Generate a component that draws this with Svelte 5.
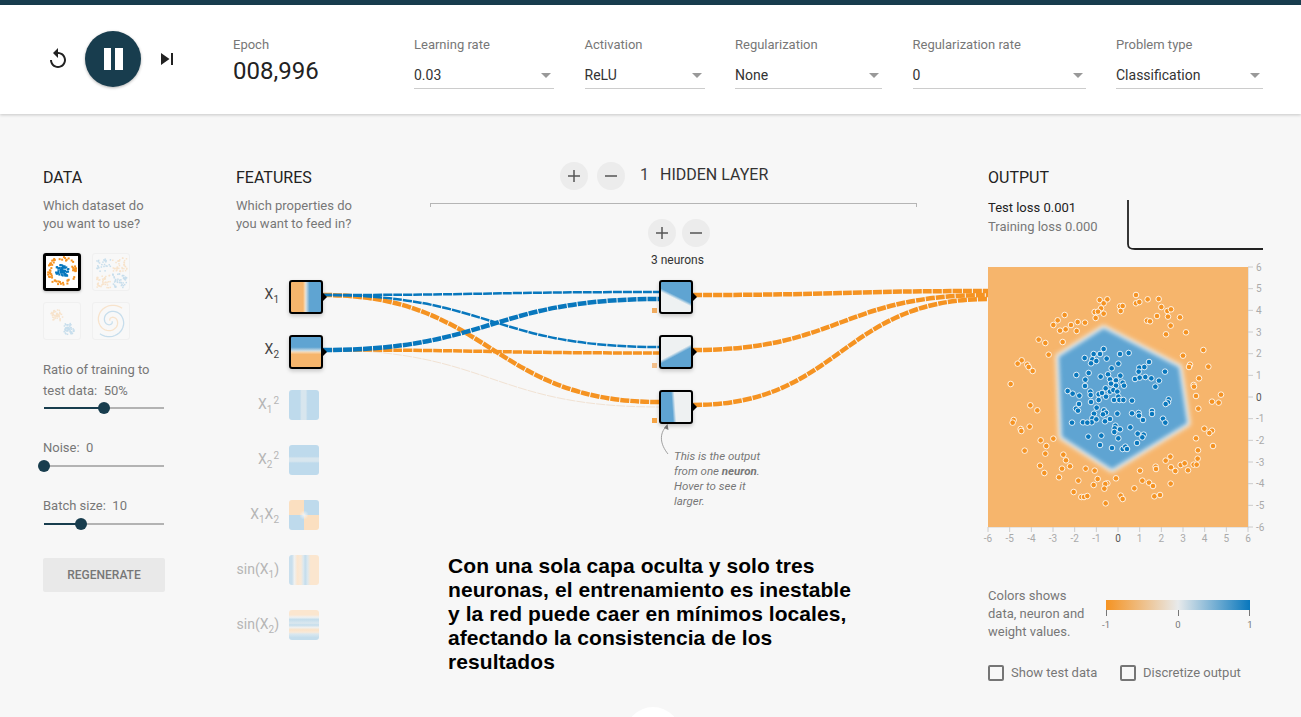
<script lang="ts">
  /* Neural net playground screen. Plot points are in crop coords, see toPlot. */
  const selects = [
    { label: 'Learning rate', value: '0.03', w: 140 },
    { label: 'Activation', value: 'ReLU', w: 120 },
    { label: 'Regularization', value: 'None', w: 147 },
    { label: 'Regularization rate', value: '0', w: 173 },
    { label: 'Problem type', value: 'Classification', w: 147 },
  ]

  const sliders = [
    { lines: ['Ratio of training to', 'test data:\u00a0\u00a050%'], pct: 50, cls: 'first' },
    { lines: ['Noise:\u00a0\u00a00'], pct: 0, cls: '' },
    { lines: ['Batch size:\u00a0\u00a010'], pct: 31, cls: '' },
  ]

  const ORANGE = '#f59322'
  const BLUE = '#0877bd'

  // seeded so the thumbnails come out the same every load
  let seed = 12345
  function rnd() {
    seed = (seed + 0x6d2b79f5) | 0
    let t = Math.imul(seed ^ (seed >>> 15), 1 | seed)
    t = (t + Math.imul(t ^ (t >>> 7), 61 | t)) ^ t
    return ((t ^ (t >>> 14)) >>> 0) / 4294967296
  }

  type Cell = { x: number; y: number; c: string }

  function circleCells(): Cell[] {
    const out: Cell[] = []
    for (let i = 0; i < 60; i++) {
      const a = rnd() * Math.PI * 2
      const r = 11 + rnd() * 3.500
      out.push({ x: 15 + Math.cos(a) * r, y: 14 + Math.sin(a) * r, c: ORANGE })
    }
    for (let i = 0; i < 65; i++) {
      const a = rnd() * Math.PI * 2
      const r = rnd() * 7
      out.push({ x: 15 + Math.cos(a) * r, y: 14.500 + Math.sin(a) * r, c: BLUE })
    }
    return out
  }

  function xorCells(): Cell[] {
    const out: Cell[] = []
    for (let i = 0; i < 190; i++) {
      const x = 2 + rnd() * 30
      const y = 2 + rnd() * 30
      if (Math.abs(x - 17) < 1 || Math.abs(y - 17) < 1) continue
      out.push({ x, y, c: (x < 17) === (y < 17) ? BLUE : ORANGE })
    }
    return out
  }

  function gaussCells(): Cell[] {
    const out: Cell[] = []
    for (let i = 0; i < 110; i++) {
      const a = rnd() * Math.PI * 2
      const r = rnd() * 6
      const blue = i % 2 === 0
      out.push({
        x: (blue ? 23 : 11) + Math.cos(a) * r,
        y: (blue ? 24 : 11) + Math.sin(a) * r,
        c: blue ? BLUE : ORANGE,
      })
    }
    return out
  }

  function spiralPath(turn: number) {
    let d = ''
    for (let i = 0; i <= 50; i++) {
      const t = i / 50
      const a = turn + t * Math.PI * 2.600
      const r = 1 + t * 16
      d += (i ? 'L' : 'M') + (18 + Math.cos(a) * r).toFixed(1) + ' ' + (18 + Math.sin(a) * r).toFixed(1)
    }
    return d
  }

  const circles = circleCells()
  const xor = xorCells()
  const gauss = gaussCells()

  const features = [
    { cls: 'x1', active: true, name: 'X', sub: '1', sup: '' },
    { cls: 'x2', active: true, name: 'X', sub: '2', sup: '' },
    { cls: 'x1sq', active: false, name: 'X', sub: '1', sup: '2' },
    { cls: 'x2sq', active: false, name: 'X', sub: '2', sup: '2' },
    { cls: 'x1x2', active: false, name: 'X', sub: '1', sup: '' },
    { cls: 'sinx1', active: false, name: 'sin(X', sub: '1', sup: '' },
    { cls: 'sinx2', active: false, name: 'sin(X', sub: '2', sup: '' },
  ]

  const neurons = ['n1', 'n2', 'n3']

  function link(x0: number, y0: number, x1: number, y1: number) {
    const m = (x0 + x1) / 2
    return `M${x0} ${y0}C${m} ${y0} ${m} ${y1} ${x1} ${y1}`
  }

  const links = [
    { d: link(323, 350, 659, 407), c: '#f1e2d3', w: 1 },
    { d: link(323, 295, 659, 402), c: ORANGE, w: 4.5 },
    { d: link(323, 350, 659, 353), c: ORANGE, w: 3.5 },
    { d: link(323, 295, 659, 347), c: BLUE, w: 2.5 },
    { d: link(323, 295, 659, 292), c: BLUE, w: 2.5 },
    { d: link(323, 350, 659, 299), c: BLUE, w: 4.5 },
    { d: link(693, 295, 988, 291), c: ORANGE, w: 4.5 },
    { d: link(693, 350, 988, 295), c: ORANGE, w: 4.5 },
    { d: link(693, 405, 988, 299), c: ORANGE, w: 4.5 },
  ]

  const orangePts = [[382,118],[359,120],[371,130],[363,145],[344,156],[354,155],[371,161],[347,174],[468,105],[468,130],[478,126],[503,118],[536,117],[544,141],[562,153],[573,148],[564,170],[531,168],[501,182],[510,184],[600,172],[572,197],[618,217],[558,223],[420,139],[428,138],[422,153],[254,165],[233,181],[220,195],[240,212],[257,208],[273,195],[293,186],[315,188],[290,213],[248,246],[176,239],[196,249],[206,284],[125,301],[113,311],[142,314],[146,321],[158,333],[92,372],[670,270],[609,287],[630,314],[627,321],[685,320],[657,355],[641,375],[642,380],[648,408],[723,404],[696,425],[716,428],[655,446],[151,436],[172,451],[101,480],[98,488],[149,500],[122,507],[124,513],[220,536],[182,541],[199,558],[196,581],[134,572],[180,617],[193,639],[250,584],[258,601],[246,626],[270,619],[237,652],[317,626],[344,632],[295,662],[353,657],[341,675],[382,670],[376,672],[373,686],[408,655],[281,696],[304,711],[312,711],[322,708],[377,730],[422,707],[428,717],[463,685],[480,632],[487,662],[507,668],[519,678],[523,709],[540,705],[572,671],[527,620],[528,627],[557,602],[571,590],[573,622],[586,633],[602,615],[614,610],[624,631],[641,614],[650,614],[653,596],[654,571],[648,535],[673,506],[696,512],[688,519],[699,558]]
  const bluePts = [[371,267],[341,282],[360,282],[314,294],[337,298],[349,303],[380,296],[333,310],[420,282],[446,279],[415,311],[395,325],[507,306],[478,323],[493,321],[476,335],[555,335],[326,339],[289,345],[316,359],[315,378],[362,350],[384,343],[421,347],[390,358],[408,361],[393,371],[408,377],[428,368],[432,377],[465,357],[479,353],[496,351],[514,355],[537,362],[526,380],[377,385],[390,395],[331,395],[263,393],[278,401],[298,407],[332,405],[356,403],[366,399],[356,420],[333,426],[378,410],[400,390],[412,395],[415,410],[402,420],[418,420],[430,420],[456,422],[566,418],[564,427],[557,432],[297,432],[288,446],[294,452],[350,443],[372,451],[378,458],[369,463],[342,461],[337,475],[349,478],[335,487],[375,484],[390,477],[412,461],[456,460],[476,459],[477,467],[516,453],[516,462],[489,480],[549,476],[556,488],[276,488],[309,487],[322,488],[406,497],[404,505],[420,508],[451,502],[403,516],[473,521],[491,524],[487,532],[415,535],[325,530],[364,527],[360,555],[396,564],[428,567],[436,560],[441,567],[471,549]]

  // crop coords (3x, origin 980,260) to plot coords (origin 988,267)
  const toPlot = ([x, y]: number[]) => [x / 3 - 8, y / 3 - 7]
  const hexPts = [[371,205],[597,322],[622,490],[396,628],[245,530],[236,290]]
    .map(toPlot)
    .map((p) => p.map((v) => v.toFixed(1)).join(','))
    .join(' ')
  const orangeDots = orangePts.map(toPlot)
  const blueDots = bluePts.map(toPlot)

  const ticks = [-6, -5, -4, -3, -2, -1, 0, 1, 2, 3, 4, 5, 6]
  const pos = (v: number) => ((v + 6) / 12) * 260
</script>

<div class="page">
  <div class="topbar"></div>
  <header class="header">
    <button class="icon-btn reset" aria-label="Reset">
      <svg width="24" height="24" viewBox="0 0 24 24"><path d="M12 5V1L7 6l5 5V7c3.31 0 6 2.69 6 6s-2.69 6-6 6-6-2.69-6-6H4c0 4.42 3.58 8 8 8s8-3.58 8-8-3.58-8-8-8z" /></svg>
    </button>
    <button class="play" aria-label="Pause">
      <span class="bar"></span><span class="bar"></span>
    </button>
    <button class="icon-btn step" aria-label="Step">
      <svg width="24" height="24" viewBox="0 0 24 24"><path d="M6 18l8.5-6L6 6v12zM16 6v12h2V6h-2z" /></svg>
    </button>
    <div class="epoch">
      <div class="field-label">Epoch</div>
      <div class="epoch-value">008,996</div>
    </div>
    <div class="selects">
      {#each selects as s}
        <div class="select" style="width: {s.w}px">
          <div class="field-label">{s.label}</div>
          <div class="select-value">
            <span>{s.value}</span>
            <span class="caret"></span>
          </div>
        </div>
      {/each}
    </div>
  </header>

  <main class="main">
    <svg class="links" width="1301" height="603" viewBox="0 114 1301 603">
      {#each links as l}
        <path d={l.d} fill="none" stroke={l.c} stroke-width={l.w} stroke-dasharray="9 1" />
      {/each}
      <path d="M668 454C660 444 659 434 666.5 426" fill="none" stroke="#8a8a8a" stroke-width="0.8" />
      <path d="M667.500 424L668.500 430L664 428Z" fill="#777" />
    </svg>

    <section class="data">
      <h4>DATA</h4>
      <p class="desc">Which dataset do<br />you want to use?</p>
      <div class="datasets">
        <div class="thumb selected">
          <svg width="32" height="32" viewBox="0 0 32 32">
            {#each circles as p}<rect x={p.x} y={p.y} width="2" height="2" fill={p.c} />{/each}
          </svg>
        </div>
        <div class="thumb">
          <svg width="34" height="34" viewBox="0 0 34 34">
            {#each xor as p}<rect x={p.x} y={p.y} width="1.500" height="1.500" fill={p.c} />{/each}
          </svg>
        </div>
        <div class="thumb">
          <svg width="34" height="34" viewBox="0 0 34 34">
            {#each gauss as p}<rect x={p.x} y={p.y} width="1.500" height="1.500" fill={p.c} />{/each}
          </svg>
        </div>
        <div class="thumb">
          <svg width="36" height="36" viewBox="0 0 36 36">
            <path d={spiralPath(0.4)} fill="none" stroke={BLUE} stroke-width="1.300" />
            <path d={spiralPath(0.4 + Math.PI)} fill="none" stroke={ORANGE} stroke-width="1.300" />
          </svg>
        </div>
      </div>
      {#each sliders as s}
        <div class="slider-block {s.cls}">
          {#each s.lines as line}<div class="slider-label">{line}</div>{/each}
          <div class="slider">
            <div class="slider-fill" style="width: {s.pct}%"></div>
            <div class="slider-thumb" style="left: {s.pct}%"></div>
          </div>
        </div>
      {/each}
      <button class="regen">REGENERATE</button>
    </section>

    <section class="features">
      <h4>FEATURES</h4>
      <p class="desc">Which properties do<br />you want to feed in?</p>
      <div class="feature-list">
        {#each features as f}
          <div class="feature" class:on={f.active}>
            <div class="feature-label">
              {#if f.cls === 'x1x2'}X<sub>1</sub>X<sub>2</sub>{:else}{f.name}<sub>{f.sub}</sub>{#if f.sup}<sup>{f.sup}</sup>{/if}{#if f.name !== 'X'}){/if}{/if}
            </div>
            <div class="heat {f.cls}" class:active={f.active}>
              {#if f.active}<span class="nub"></span>{/if}
            </div>
          </div>
        {/each}
      </div>
    </section>

    <section class="hidden">
      <div class="layer-head">
        <button class="round" aria-label="Add layer">
          <svg width="14" height="14" viewBox="0 0 14 14"><path d="M7 1v12M1 7h12" /></svg>
        </button>
        <button class="round" aria-label="Remove layer">
          <svg width="14" height="14" viewBox="0 0 14 14"><path d="M1 7h12" /></svg>
        </button>
        <span class="layer-count">1</span>
        <span class="layer-title">HIDDEN LAYER</span>
      </div>
      <div class="bracket"></div>
      <div class="neuron-ctl">
        <button class="round" aria-label="Add neuron">
          <svg width="14" height="14" viewBox="0 0 14 14"><path d="M7 1v12M1 7h12" /></svg>
        </button>
        <button class="round" aria-label="Remove neuron">
          <svg width="14" height="14" viewBox="0 0 14 14"><path d="M1 7h12" /></svg>
        </button>
      </div>
      <div class="neuron-count">3 neurons</div>
      <div class="neurons">
        {#each neurons as n}
          <div class="neuron-row">
            <div class="heat active {n}">
              <span class="nub"></span>
              <span class="bias {n}"></span>
            </div>
          </div>
        {/each}
      </div>
      <p class="callout">This is the output<br />from one <b>neuron</b>.<br />Hover to see it<br />larger.</p>
      <p class="note">Con una sola capa oculta y solo tres neuronas, el entrenamiento es inestable y la red puede caer en mínimos locales, afectando la consistencia de los resultados</p>
    </section>

    <section class="output">
      <h4>OUTPUT</h4>
      <div class="loss-row">
        <div class="loss">
          <div class="test">Test loss <span>0.001</span></div>
          <div class="train">Training loss 0.000</div>
        </div>
        <svg class="loss-chart" width="136" height="56" viewBox="0 0 136 56">
          <path d="M1 2V46C1 50 3 51 8 51H136" fill="none" stroke="#222" stroke-width="1.800" />
        </svg>
      </div>
      <svg class="plot" width="275" height="285" viewBox="0 0 275 285">
        <defs>
          <filter id="halo" x="-15%" y="-15%" width="130%" height="130%">
            <feGaussianBlur stdDeviation="2.400" />
          </filter>
          <filter id="soft" x="-10%" y="-10%" width="120%" height="120%">
            <feGaussianBlur stdDeviation="2.200" />
          </filter>
        </defs>
        <rect width="260" height="260" fill="#f6b56c" />
        <polygon points={hexPts} fill="#f0f3f4" stroke="#f0f3f4" stroke-width="6" filter="url(#halo)" />
        <polygon points={hexPts} fill="#5fa4d2" filter="url(#soft)" />
        {#each orangeDots as p}
          <circle cx={p[0]} cy={p[1]} r="2.800" fill={ORANGE} stroke="#fff" stroke-width="1" stroke-opacity="0.85" />
        {/each}
        {#each blueDots as p}
          <circle cx={p[0]} cy={p[1]} r="2.800" fill={BLUE} stroke="#fff" stroke-width="1" stroke-opacity="0.85" />
        {/each}
        <path d="M0 260.500H260.500V0" fill="none" stroke="#e4e4e4" />
        {#each ticks as t}
          <path d="M{pos(t)} 260v5" stroke="#ccc" />
          <path d="M260 {260 - pos(t)}h5" stroke="#ccc" />
          <text class="tick" class:zero={t === 0} x={pos(t)} y="275" text-anchor="middle">{t}</text>
          <text class="tick" class:zero={t === 0} x="268" y={263.500 - pos(t)}>{t}</text>
        {/each}
      </svg>
      <div class="legend">
        <p class="legend-text">Colors shows<br />data, neuron and<br />weight values.</p>
        <div class="scale">
          <div class="scale-bar"></div>
          <div class="scale-ticks">
            <span>-1</span><span>0</span><span>1</span>
          </div>
        </div>
      </div>
      <div class="checks">
        <label class="check first"><span class="box"></span>Show test data</label>
        <label class="check"><span class="box"></span>Discretize output</label>
      </div>
    </section>

    <div class="fab"></div>
  </main>
</div>

<style>
  :global(body) {
    margin: 0;
    background: #f7f7f7;
  }
  .page {
    width: 1301px;
    height: 717px;
    overflow: hidden;
    font-family: Roboto, "Liberation Sans", sans-serif;
    color: #777;
  }
  button {
    font-family: inherit;
    border: none;
    padding: 0;
    background: none;
  }
  .topbar {
    height: 5px;
    background: #183d4e;
  }
  .header {
    position: relative;
    z-index: 2;
    height: 109px;
    box-sizing: border-box;
    display: flex;
    align-items: flex-start;
    padding-left: 46px;
    background: #fff;
    box-shadow: 0 1px 3px rgba(0, 0, 0, 0.2);
  }
  .icon-btn {
    width: 24px;
    height: 24px;
    margin-top: 42px;
  }
  .icon-btn svg {
    display: block;
    fill: #222;
  }
  .play {
    width: 56px;
    height: 56px;
    margin: 26px 13.500px 0 15px;
    border-radius: 50%;
    background: #183d4e;
    display: flex;
    align-items: center;
    justify-content: center;
    gap: 4px;
    box-shadow: 0 1px 3px rgba(0, 0, 0, 0.3);
  }
  .bar {
    width: 7.500px;
    height: 22px;
    background: #fff;
  }
  .epoch {
    width: 181px;
    margin-left: 54.500px;
    padding-top: 32px;
  }
  .field-label {
    font-size: 13px;
    line-height: 16px;
    color: #777;
  }
  .epoch-value {
    margin-top: 3px;
    font-size: 24px;
    line-height: 30px;
    color: #222;
  }
  .selects {
    display: flex;
    gap: 30.500px;
    padding-top: 32px;
  }
  .select-value {
    display: flex;
    align-items: center;
    justify-content: space-between;
    box-sizing: border-box;
    height: 28px;
    margin-top: 8px;
    padding: 0 3px 0 0;
    font-size: 14px;
    color: #333;
    border-bottom: 1px solid #ccc;
  }
  .caret {
    width: 0;
    height: 0;
    margin-top: 2px;
    border-left: 5px solid transparent;
    border-right: 5px solid transparent;
    border-top: 5px solid #999;
  }
  .main {
    position: relative;
    height: 603px;
    display: flex;
    padding: 54px 0 0 43px;
    box-sizing: border-box;
  }
  .links {
    position: absolute;
    left: 0;
    top: 0;
    pointer-events: none;
  }
  h4 {
    margin: 0;
    font-size: 16px;
    font-weight: 400;
    line-height: 20px;
    color: #222;
  }
  .desc {
    margin: 9px 0 0;
    font-size: 13px;
    line-height: 18px;
    color: #777;
  }
  .data {
    width: 193px;
    flex: none;
  }
  .datasets {
    display: grid;
    grid-template-columns: 38px 38px;
    grid-auto-rows: 38px;
    gap: 11px;
    margin-top: 20px;
  }
  .thumb {
    box-sizing: border-box;
    display: flex;
    align-items: center;
    justify-content: center;
    border: 1px solid #f0f0f0;
    border-radius: 3px;
    background: #f8f8f8;
  }
  .thumb svg {
    opacity: 0.2;
  }
  .thumb.selected {
    background: #fff;
    border: 3px solid #000;
    box-shadow: 0 1px 3px rgba(0, 0, 0, 0.25);
  }
  .thumb.selected svg {
    opacity: 1;
  }
  .slider-block {
    width: 122px;
    font-size: 13px;
    color: #777;
  }
  .slider-block.first {
    margin-top: 19px;
  }
  .slider-label {
    line-height: 21px;
  }
  .slider {
    position: relative;
    width: 120px;
    height: 2px;
    margin: 7px 0 28px 1px;
    background: #b3b3b3;
  }
  .first .slider {
    margin-top: 6px;
  }
  .slider-fill {
    height: 100%;
    background: #183d4e;
  }
  .slider-thumb {
    position: absolute;
    top: -5px;
    width: 12px;
    height: 12px;
    margin-left: -6px;
    border-radius: 50%;
    background: #183d4e;
  }
  .regen {
    display: block;
    width: 122px;
    height: 34px;
    margin-top: 33px;
    background: #e9e9e9;
    color: #777;
    font-size: 12px;
    font-weight: 500;
    border-radius: 2px;
  }
  .features {
    width: 194px;
    flex: none;
    position: relative;
  }
  .feature-list {
    margin-top: 47px;
  }
  .feature {
    display: flex;
    height: 55px;
    color: #b5b5b5;
  }
  .feature.on {
    color: #444;
  }
  .feature-label {
    width: 43px;
    white-space: nowrap;
    display: flex;
    justify-content: flex-end;
    align-items: baseline;
    font-size: 14px;
    line-height: 28px;
    margin-right: 10px;
  }
  .feature-label sub {
    font-size: 10px;
    vertical-align: baseline;
    position: relative;
    top: 4px;
  }
  .feature-label sup {
    font-size: 10px;
    vertical-align: baseline;
    position: relative;
    top: -5px;
    margin-left: 1px;
  }
  .heat {
    position: relative;
    box-sizing: border-box;
    width: 30px;
    height: 30px;
    border-radius: 3px;
  }
  .heat.active {
    width: 34px;
    height: 34px;
    border: 2.500px solid #000;
    box-shadow: 0 2px 4px rgba(0, 0, 0, 0.2);
  }
  .nub {
    position: absolute;
    right: -6px;
    top: 9.500px;
    width: 0;
    height: 0;
    border-top: 5px solid transparent;
    border-bottom: 5px solid transparent;
    border-left: 5px solid #000;
  }
  .x1 {
    background: linear-gradient(90deg, #f6b56c 40%, #f5d8b4 46%, #d6dfe2 50%, #5fa4d2 62%);
  }
  .x2 {
    background: linear-gradient(180deg, #5fa4d2 34%, #cfdde4 46%, #f5d8b4 50%, #f6b56c 58%);
  }
  .x1sq {
    background: linear-gradient(90deg, #bedaec 36%, #d8e6ee 42%, #d8e6ee 56%, #bedaec 62%);
  }
  .x2sq {
    background: linear-gradient(180deg, #bedaec 38%, #d8e6ee 44%, #d8e6ee 54%, #bedaec 60%);
  }
  .x1x2 {
    background:
      radial-gradient(circle at 50% 50%, #f1f3f4 0, rgba(240, 240, 240, 0) 22%),
      conic-gradient(#bedaec 25%, #fbdfc0 25% 50%, #bedaec 50% 75%, #fbdfc0 75%);
  }
  .sinx1 {
    background: linear-gradient(90deg, #c9dfed 10%, #eff1f1 18%, #fbe6cf 28%, #f8e9d8 40%, #dbe8ef 48%, #c4ddec 54%, #dbe8ef 62%, #fbe6cf 72%, #fbe6cf);
  }
  .sinx2 {
    background: linear-gradient(180deg, #fbe6cf 16%, #eff1f1 24%, #c4ddec 32%, #dbe8ef 44%, #c4ddec 50%, #eef0f0 58%, #fbe3c8 66%, #f8e9d8 74%, #dbe8ef 80%, #c4ddec 92%);
  }
  .hidden {
    width: 487px;
    flex: none;
    position: relative;
    margin-top: -6px;
  }
  .layer-head {
    display: flex;
    align-items: center;
    height: 28px;
    gap: 9px;
    padding-left: 130px;
  }
  .round {
    width: 28px;
    height: 28px;
    border-radius: 50%;
    background: #ececec;
    display: flex;
    align-items: center;
    justify-content: center;
  }
  .round svg {
    fill: none;
    stroke: #555;
    stroke-width: 1.500;
  }
  .layer-count {
    position: relative;
    top: -2px;
    margin-left: 6px;
    font-size: 16px;
    color: #444;
  }
  .layer-title {
    position: relative;
    top: -2px;
    margin-left: 2px;
    font-size: 16px;
    color: #333;
  }
  .bracket {
    height: 3px;
    margin-top: 13px;
    border: 1px solid #b5b5b5;
    border-bottom: none;
  }
  .neuron-ctl {
    display: flex;
    gap: 6px;
    padding-left: 218px;
    margin-top: 12px;
  }
  .neuron-count {
    width: 100%;
    margin-top: 6px;
    padding-left: 221px;
    font-size: 12px;
    line-height: 14px;
    color: #333;
  }
  .neurons {
    margin-top: 13px;
    padding-left: 229px;
  }
  .neuron-row {
    height: 55px;
  }
  .n1.heat {
    background: linear-gradient(26deg, #eef1f2 45%, #5fa4d2 53%);
  }
  .n2.heat {
    background: linear-gradient(152deg, #eef1f2 50%, #5fa4d2 58%);
  }
  .n3.heat {
    background: linear-gradient(266deg, #eef1f2 52%, #5fa4d2 62%);
  }
  .bias {
    position: absolute;
    left: -9.500px;
    bottom: -1px;
    width: 5px;
    height: 5px;
  }
  .bias.n1 {
    background: #f0ab5f;
  }
  .bias.n2 {
    background: #f2be8a;
  }
  .bias.n3 {
    background: #f5a445;
  }
  .callout {
    margin: 4px 0 0 244px;
    font-size: 11.500px;
    line-height: 15px;
    font-style: italic;
    color: #777;
  }
  .callout b {
    font-weight: 700;
  }
  .note {
    margin: 45px 0 0 18px;
    width: 410px;
    font-family: "Liberation Sans", Arial, sans-serif;
    font-size: 21px;
    font-weight: 700;
    line-height: 24px;
    letter-spacing: 0.07px;
    color: #000;
  }
  .output {
    margin-left: 71px;
    width: 275px;
    flex: none;
    position: relative;
  }
  .loss-row {
    display: flex;
    height: 79px;
    padding-top: 10px;
    box-sizing: border-box;
  }
  .loss {
    width: 138.500px;
    font-size: 13px;
    line-height: 19px;
  }
  .test {
    color: #222;
  }
  .train {
    color: #777;
  }
  .loss-chart {
    flex: none;
  }
  .plot {
    display: block;
    overflow: visible;
  }
  .tick {
    font-size: 10px;
    fill: #aaa;
  }
  .tick.zero {
    fill: #555;
  }
  .legend {
    display: flex;
    margin-top: 35px;
  }
  .legend-text {
    margin: 0;
    width: 118px;
    font-size: 13px;
    line-height: 18px;
    color: #777;
  }
  .scale {
    width: 144px;
    margin-top: 13px;
  }
  .scale-bar {
    height: 10px;
    background: linear-gradient(90deg, #f59322, #e8eaeb 50%, #0877bd);
  }
  .scale-ticks {
    display: flex;
    justify-content: space-between;
    height: 6px;
    padding-top: 8px;
    font-size: 9.500px;
    line-height: 14px;
    color: #777;
    background:
      linear-gradient(#777, #777) 0 0 / 1px 6px no-repeat,
      linear-gradient(#777, #777) 50% 0 / 1px 6px no-repeat,
      linear-gradient(#777, #777) 100% 0 / 1px 6px no-repeat;
  }
  .scale-ticks span {
    width: 12px;
    margin: 0 -6px;
    text-align: center;
  }
  .checks {
    display: flex;
    margin-top: 24px;
  }
  .check {
    display: flex;
    align-items: center;
    font-size: 13px;
    line-height: 16px;
    color: #777;
  }
  .check.first {
    width: 132px;
  }
  .box {
    box-sizing: border-box;
    width: 16px;
    height: 16px;
    margin-right: 7px;
    border: 2px solid #757575;
    border-radius: 2px;
  }
  .fab {
    position: absolute;
    left: 625px;
    top: 593px;
    width: 56px;
    height: 56px;
    border-radius: 50%;
    background: #fff;
  }
</style>
